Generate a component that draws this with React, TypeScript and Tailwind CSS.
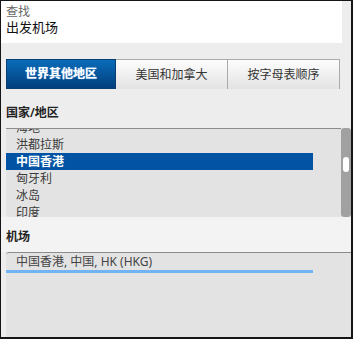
const countries = ["海地", "洪都拉斯", "中国香港", "匈牙利", "冰岛", "印度"];
const selected = "中国香港";

const tabs = [
  { name: "世界其他地区", active: true },
  { name: "美国和加拿大", active: false },
  { name: "按字母表顺序", active: false },
];

export default function App() {
  return (
    <div
      className="w-[353px] h-[339px] overflow-hidden border border-r-2 border-b-2 border-[#161616] bg-[#ededed] flex flex-col text-[12px] leading-[16px]"
      style={{ fontFamily: '"Noto Sans", "Noto Sans CJK SC", sans-serif' }}
    >
      {/* Header */}
      <div className="h-[42px] mr-[9px] bg-white pl-[5px] pt-[4px] flex flex-col flex-shrink-0">
        <span className="text-[12px] leading-[14px] text-[#666]">查找</span>
        <span className="text-[13px] leading-[16px] text-[#111]">出发机场</span>
      </div>

      {/* Tabs */}
      <div className="mt-[16px] h-[30px] ml-[5px] flex flex-shrink-0">
        {tabs.map((tab) =>
          tab.active ? (
            <div
              key={tab.name}
              className="w-[110px] h-full flex items-center justify-center border border-[#0a3d70] bg-gradient-to-b from-[#0b6cba] to-[#02407d] text-white font-bold [text-shadow:0_0_1px_#9fd0ff]"
            >
              {tab.name}
            </div>
          ) : (
            <div
              key={tab.name}
              className="w-[112px] h-full flex items-center justify-center border border-b-0 border-[#aaaaaa] border-l-0 bg-gradient-to-b from-[#fdfdfd] to-[#e3e3e3] text-[#333]"
            >
              {tab.name}
            </div>
          )
        )}
      </div>

      {/* Country label */}
      <div className="h-[39px] pl-[5px] pt-[16px] text-[#222] font-semibold flex-shrink-0">国家/地区</div>

      {/* Country list */}
      <div className="h-[89px] flex flex-shrink-0">
        <div className="flex-1 ml-[5px] border-t border-[#8c8c8c] bg-[#e3e3e3] rounded-bl-[3px] overflow-hidden">
          <div className="-mt-[10px] flex flex-col">
            {countries.map((c) => (
              <div
                key={c}
                className={`w-[307px] h-[17px] pl-[10px] flex items-center ${
                  c === selected ? "bg-[#0353a4] text-white font-bold" : "text-[#3a3a3a]"
                }`}
              >
                {c}
              </div>
            ))}
          </div>
        </div>
        <div className="w-[10px] bg-[#a1a1a1] rounded-[3px] pt-[29px] px-[2px] flex-shrink-0">
          <div className="h-[15px] bg-white rounded-[3px]" />
        </div>
      </div>

      {/* Airport */}
      <div className="h-[35px] pl-[5px] pt-[12px] bg-[#f3f3f3] text-[#222] font-semibold flex-shrink-0">机场</div>
      <div className="flex-1 ml-[5px] border-t border-[#8c8c8c] bg-[#e3e3e3] rounded-tl-[3px]">
        <div className="h-[17px] pl-[10px] flex items-center text-[#444]">中国香港, 中国, HK (HKG)</div>
        <div className="w-[307px] h-[3px] bg-[#72b3f4]" />
      </div>
    </div>
  );
}
